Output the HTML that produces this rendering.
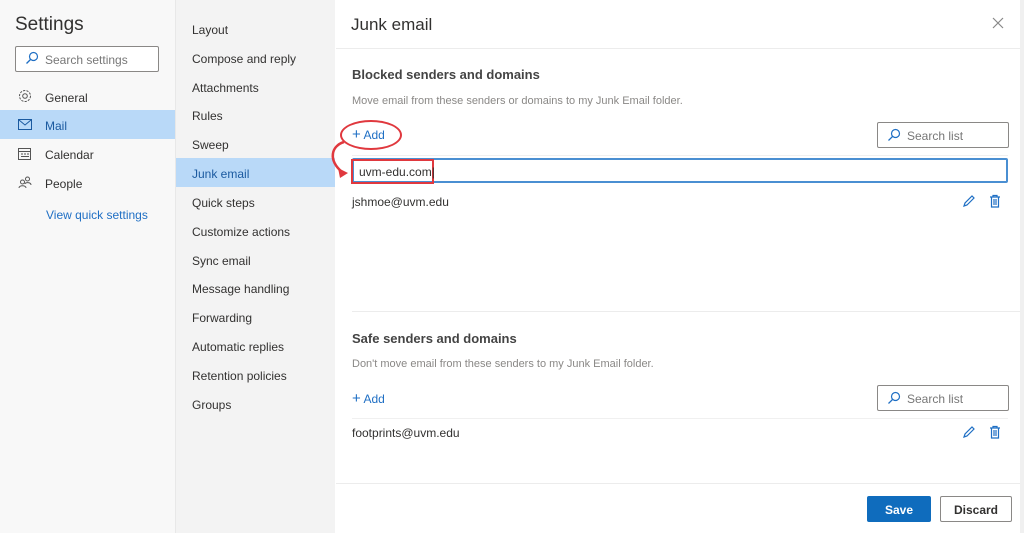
<!DOCTYPE html><html><head><style>
*{box-sizing:border-box;margin:0;padding:0;white-space:nowrap}
body{width:1024px;height:533px;overflow:hidden;font-family:"Liberation Sans",sans-serif;color:#323130;background:#fff;position:relative;font-size:12px}
.a{position:absolute}
.nav1{left:0;top:0;width:175px;height:533px;background:#f8f8f8}
.nav2{left:175px;top:0;width:160px;height:533px;background:#f3f3f3;border-left:1px solid #e8e8e8}
.sel{background:#b9d9f8;color:#1b5aa0}
.n2 div{position:absolute;font-size:12px}
.hl{height:1px;background:#ececec}
.blue{color:#1f6fc4}
.sl{width:132px;height:26px;border:1px solid #8a8886;border-radius:2px;color:#777;font-size:12px;padding:6px 0 0 29px}
</style></head><body>
<div class="a nav1"></div>
<div class="a" style="left:15px;top:14px;font-size:19px;color:#323130">Settings</div>
<div class="a" style="left:15px;top:46px;width:144px;height:26px;border:1px solid #8a8886;border-radius:2px;background:#fff;color:#777;padding:6px 0 0 29px">Search settings</div>
<svg class="a" style="left:25px;top:51px" width="14" height="14"><circle cx="8.5" cy="5.5" r="4" fill="none" stroke="#1f6fc4" stroke-width="1.2"/><path d="M5.5 8.5L1.5 12.5" stroke="#1f6fc4" stroke-width="1.3"/></svg>
<svg class="a" style="left:18px;top:89px" width="14" height="14"><circle cx="7" cy="7" r="2.3" fill="none" stroke="#555"/><circle cx="7" cy="7" r="5.5" fill="none" stroke="#555" stroke-dasharray="2.2 1.2"/></svg>
<div class="a" style="left:45px;top:91px">General</div>
<div class="a sel" style="left:0;top:110px;width:175px;height:29px"></div>
<svg class="a" style="left:18px;top:119px" width="15" height="12"><rect x="0.5" y="0.5" width="13" height="10" fill="none" stroke="#1b5aa0"/><path d="M1 1L7 6L13 1" fill="none" stroke="#1b5aa0"/></svg>
<div class="a" style="left:45px;top:119px;color:#1b5aa0">Mail</div>
<svg class="a" style="left:18px;top:147px" width="14" height="13"><rect x="0.5" y="1.5" width="12" height="11" fill="none" stroke="#555"/><path d="M1 4.5H12M3 7h2M6 7h2M9 7h2M3 9.5h8" stroke="#555"/></svg>
<div class="a" style="left:45px;top:148px">Calendar</div>
<svg class="a" style="left:18px;top:176px" width="14" height="13"><circle cx="4.5" cy="6" r="2" fill="none" stroke="#555"/><circle cx="9.5" cy="3" r="2" fill="none" stroke="#555"/><path d="M1 12c0-3 7-3 7 0M7 8c0-2 6-2 6 1" fill="none" stroke="#555"/></svg>
<div class="a" style="left:45px;top:177px">People</div>
<div class="a blue" style="left:46px;top:208px">View quick settings</div>
<div class="a nav2"></div>
<div class="a sel" style="left:176px;top:158px;width:159px;height:29px"></div>
<div class="n2">
<div style="top:23px;left:192px">Layout</div>
<div style="top:52px;left:192px">Compose and reply</div>
<div style="top:81px;left:192px">Attachments</div>
<div style="top:109px;left:192px">Rules</div>
<div style="top:138px;left:192px">Sweep</div>
<div style="top:167px;left:192px;color:#1b5aa0">Junk email</div>
<div style="top:196px;left:192px">Quick steps</div>
<div style="top:225px;left:192px">Customize actions</div>
<div style="top:254px;left:192px">Sync email</div>
<div style="top:282px;left:192px">Message handling</div>
<div style="top:311px;left:192px">Forwarding</div>
<div style="top:340px;left:192px">Automatic replies</div>
<div style="top:369px;left:192px">Retention policies</div>
<div style="top:398px;left:192px">Groups</div>
</div>
<div class="a" style="left:1020px;top:0;width:4px;height:533px;background:#f0f0f0"></div>
<div class="a" style="left:351px;top:15px;font-size:17px">Junk email</div>
<svg class="a" style="left:992px;top:17px" width="12" height="12"><path d="M1 1L11 11M11 1L1 11" stroke="#888" stroke-width="1.2"/></svg>
<div class="a hl" style="left:336px;top:48px;width:684px"></div>
<div class="a" style="left:352px;top:67px;font-size:13px;font-weight:bold;color:#444">Blocked senders and domains</div>
<div class="a" style="left:352px;top:95px;color:#8a8886;font-size:11px">Move email from these senders or domains to my Junk Email folder.</div>
<div class="a blue" style="left:352px;top:126px"><span style="font-size:15px">+</span> Add</div>
<div class="a" style="left:340px;top:120px;width:62px;height:30px;border:2.5px solid #e0383e;border-radius:50%"></div>
<svg class="a" style="left:328px;top:140px" width="30" height="40"><path d="M16 2C3 6 0 20 14 32" fill="none" stroke="#e0383e" stroke-width="2.5"/><path d="M10 28L20 33L12 38z" fill="#e0383e"/></svg>
<div class="a sl" style="left:877px;top:122px">Search list</div>
<svg class="a" style="left:887px;top:128px" width="14" height="14"><circle cx="8.5" cy="5.5" r="4" fill="none" stroke="#1f6fc4" stroke-width="1.2"/><path d="M5.5 8.5L1.5 12.5" stroke="#1f6fc4" stroke-width="1.3"/></svg>
<div class="a hl" style="left:352px;top:155px;width:656px;background:#f0f0f0"></div>
<div class="a" style="left:352px;top:158px;width:656px;height:25px;border:2px solid #4a8fd2;border-radius:2px"></div>
<div class="a" style="left:351px;top:159px;width:83px;height:25px;border:2.5px solid #e0383e;padding:4px 0 0 6px;font-size:12px">uvm-edu.com|</div>
<div class="a" style="left:352px;top:195px">jshmoe@uvm.edu</div>
<svg class="a" style="left:962px;top:194px" width="14" height="14"><path d="M2 12L3 9L10 2L12 4L5 11z" fill="none" stroke="#1f6fc4" stroke-width="1.2"/></svg>
<svg class="a" style="left:989px;top:194px" width="12" height="14"><path d="M1 3H11M4 3V1.5H8V3M2.5 3V13H9.5V3M5 5V11M7 5V11" fill="none" stroke="#1f6fc4" stroke-width="1.2"/></svg>
<div class="a hl" style="left:352px;top:311px;width:668px"></div>
<div class="a" style="left:352px;top:331px;font-size:13px;font-weight:bold;color:#444">Safe senders and domains</div>
<div class="a" style="left:352px;top:358px;color:#8a8886;font-size:11px">Don't move email from these senders to my Junk Email folder.</div>
<div class="a blue" style="left:352px;top:390px"><span style="font-size:15px">+</span> Add</div>
<div class="a sl" style="left:877px;top:385px">Search list</div>
<svg class="a" style="left:887px;top:391px" width="14" height="14"><circle cx="8.5" cy="5.5" r="4" fill="none" stroke="#1f6fc4" stroke-width="1.2"/><path d="M5.5 8.5L1.5 12.5" stroke="#1f6fc4" stroke-width="1.3"/></svg>
<div class="a hl" style="left:352px;top:418px;width:656px;background:#f0f0f0"></div>
<div class="a" style="left:352px;top:426px">footprints@uvm.edu</div>
<svg class="a" style="left:962px;top:425px" width="14" height="14"><path d="M2 12L3 9L10 2L12 4L5 11z" fill="none" stroke="#1f6fc4" stroke-width="1.2"/></svg>
<svg class="a" style="left:989px;top:425px" width="12" height="14"><path d="M1 3H11M4 3V1.5H8V3M2.5 3V13H9.5V3M5 5V11M7 5V11" fill="none" stroke="#1f6fc4" stroke-width="1.2"/></svg>
<div class="a hl" style="left:336px;top:483px;width:684px"></div>
<div class="a" style="left:867px;top:496px;width:64px;height:26px;background:#0f6cbd;color:#fff;font-weight:bold;text-align:center;padding-top:7px;border-radius:2px">Save</div>
<div class="a" style="left:940px;top:496px;width:72px;height:26px;border:1px solid #8a8886;font-weight:bold;text-align:center;padding-top:6px;border-radius:2px">Discard</div>
</body></html>
